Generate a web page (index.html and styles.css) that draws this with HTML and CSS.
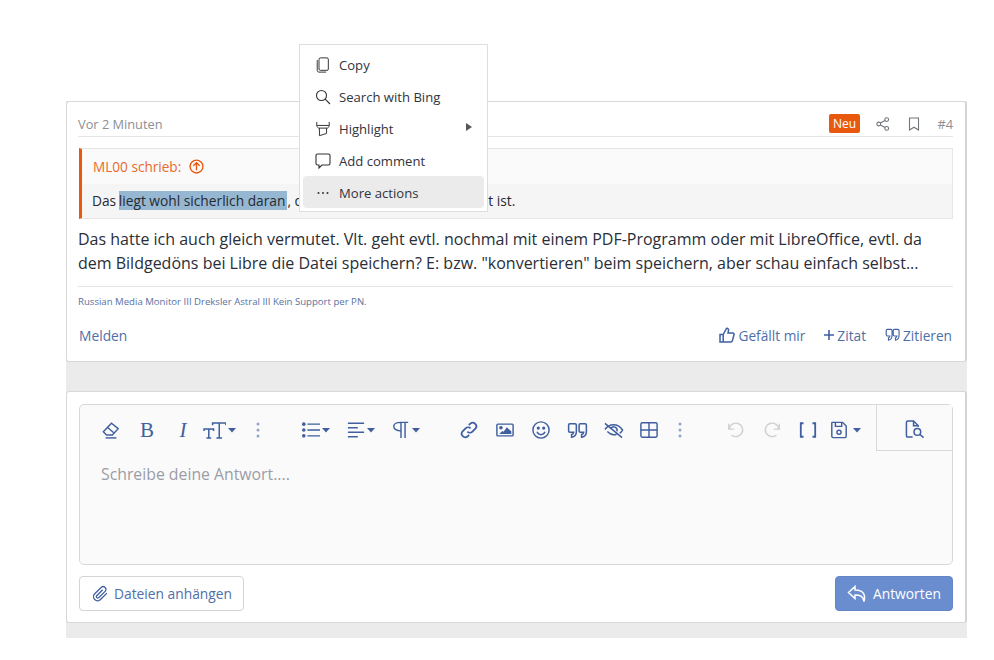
FILE: index.html
```html
<!DOCTYPE html>
<html lang="de">
<head>
<meta charset="utf-8">
<title>Antwort</title>
<link rel="stylesheet" href="styles.css">
</head>
<body>
<svg class="defs" width="0" height="0" aria-hidden="true">
  <symbol id="caret" viewBox="0 0 8 5"><path d="M0 0h8L4 4.600z" fill="currentColor" stroke="none"/></symbol>
  <symbol id="dots" viewBox="0 0 4 16"><g fill="currentColor" stroke="none" opacity=".55"><circle cx="2" cy="2" r="1.500"/><circle cx="2" cy="8" r="1.500"/><circle cx="2" cy="14" r="1.500"/></g></symbol>
</svg>
<main class="page">
  <div class="thread">
    <article class="card post">
      <header class="post-head">
        <span class="muted">Vor 2 Minuten</span>
        <div class="post-tools">
          <span class="badge">Neu</span>
          <svg class="tool-icon" viewBox="0 0 14 14"><circle cx="10.700" cy="2.600" r="1.900"/><circle cx="2.800" cy="7" r="1.900"/><circle cx="10.700" cy="11.400" r="1.900"/><path d="M4.400 6 9 3.500M4.400 8 9 10.500"/></svg>
          <svg class="tool-icon" viewBox="0 0 14 14"><path d="M2.500 1h9v12L7 10.200 2.500 13z"/></svg>
          <span class="muted num">#4</span>
        </div>
      </header>
      <blockquote class="quote">
        <div class="quote-top">
          <span>ML00 schrieb:</span>
          <svg class="up-icon" viewBox="0 0 14 14"><circle cx="7" cy="7" r="6"/><path d="M7 10.500v-7M4 6.300 7 3.400l3 2.900"/></svg>
        </div>
        <div class="quote-text">Das <span class="sel">liegt wohl sicherlich daran</span>, dass die Datei nicht gut gesetzt ist.</div>
      </blockquote>
      <p class="body-text">Das hatte ich auch gleich vermutet. Vlt. geht evtl. nochmal mit einem PDF-Programm oder mit LibreOffice, evtl. da<br>dem Bildgedöns bei Libre die Datei speichern? E: bzw. "konvertieren" beim speichern, aber schau einfach selbst...</p>
      <div class="signature">Russian Media Monitor III Dreksler Astral III Kein Support per PN.</div>
      <footer class="post-actions">
        <a class="link melden">Melden</a>
        <div class="action-group">
          <a class="link action"><svg class="act-icon" viewBox="0 0 16 16"><path d="M1 7.500h3.200V15H1zM4.200 7.500 7.600 1.200c1.500 0 2.200 1 1.900 2.300L9 6h4.800c1 0 1.500.9 1.200 1.800l-1.600 5.800c-.2.800-.8 1.400-1.600 1.400H4.200"/></svg>Gefällt mir</a>
          <a class="link action"><svg class="act-icon plus" viewBox="0 0 10 10"><path d="M5 0v10M0 5h10"/></svg>Zitat</a>
          <a class="link action"><svg class="act-icon quo" viewBox="0 0 16 14"><path d="M2.500 1h3.800c.7 0 1.200.5 1.200 1.200v5c0 2.800-1.500 4.800-3.800 5.300V10c1-.3 1.400-1 1.500-2H2.500c-.7 0-1.200-.5-1.200-1.200V2.200C1.300 1.500 1.800 1 2.500 1zM10 1h3.800c.7 0 1.200.5 1.200 1.200v5c0 2.800-1.500 4.800-3.800 5.300V10c1-.3 1.400-1 1.500-2H10c-.7 0-1.200-.5-1.200-1.200V2.200C8.800 1.500 9.300 1 10 1z"/></svg>Zitieren</a>
        </div>
      </footer>
    </article>

    <section class="card reply">
      <div class="editor">
        <div class="toolbar">
          <div class="tool-row">
            <span class="btn"><svg class="ico" viewBox="0 0 20 20"><path d="M1.500 12 10.500 2.500 18 8.500 11.500 15.500H5z"/><path d="M6 7l7 6"/><path d="M4 18.800h12"/></svg></span>
            <span class="btn glyph">B</span>
            <span class="btn glyph slant">I</span>
            <span class="btn"><svg class="ico tt" viewBox="0 0 24 20"><path d="M1 10.500V8.500h10v2M6 8.500V18M3.500 18h5M10 4.500V2h14v2.500M17 2v16M14 18h6"/></svg><svg class="car"><use href="#caret"/></svg></span>
            <span class="btn gap-a"><svg class="dot3"><use href="#dots"/></svg></span>
          </div>
          <div class="tool-row gap-b">
            <span class="btn wide"><svg class="ico" viewBox="0 0 20 20"><path d="M6 3.500h14M6 10h14M6 16.500h14"/><g fill="currentColor" stroke="none"><circle cx="2" cy="3.500" r="2"/><circle cx="2" cy="10" r="2"/><circle cx="2" cy="16.500" r="2"/></g></svg><svg class="car"><use href="#caret"/></svg></span>
            <span class="btn wide"><svg class="ico" viewBox="0 0 20 20"><path d="M1 2.500h18M1 7.500h11M1 12.500h18M1 17.500h11"/></svg><svg class="car"><use href="#caret"/></svg></span>
            <span class="btn wide"><svg class="ico" viewBox="0 0 20 20"><path d="M9.500 11C5.500 11 2 9 2 6s3.500-4.500 7.500-4.500H18M10 1.500V19M14.500 1.500V19"/></svg><svg class="car"><use href="#caret"/></svg></span>
          </div>
          <div class="tool-row gap-c">
            <span class="btn"><svg class="ico bold" viewBox="0 0 20 20"><path d="M8.200 11.800a4 4 0 0 0 5.600 0l3.500-3.500a4 4 0 0 0-5.600-5.600L9.800 4.600M11.800 8.200a4 4 0 0 0-5.600 0l-3.500 3.500a4 4 0 0 0 5.600 5.600l1.800-1.900"/></svg></span>
            <span class="btn"><svg class="ico" viewBox="0 0 20 20"><rect x="1" y="3.500" width="18" height="13" rx="1"/><circle cx="5.500" cy="7.500" r="1.200" fill="currentColor"/><path d="M3.500 14.500l3.500-3.500 1.500 1 3.500-5 5 4.500v3z" fill="currentColor" stroke="none"/></svg></span>
            <span class="btn"><svg class="ico" viewBox="0 0 20 20"><circle cx="10" cy="10" r="9"/><path d="M5.500 12c1 2.200 2.800 3.200 4.500 3.200s3.500-1 4.500-3.200"/><circle cx="7" cy="7.800" r="1" fill="currentColor"/><circle cx="13" cy="7.800" r="1" fill="currentColor"/></svg></span>
            <span class="btn"><svg class="ico big" viewBox="0 0 22 18"><path d="M3 2h5.500c.8 0 1.300.5 1.300 1.300v7c0 3.300-1.700 5.200-5 5.700v-2.700c1.500-.4 2.100-1.300 2.200-2.500H3c-.8 0-1.300-.5-1.300-1.300V3.300C1.700 2.500 2.200 2 3 2zM14 2h5c.8 0 1.300.5 1.300 1.300v7c0 3.300-1.700 5.200-5 5.700v-2.700c1.500-.4 2.100-1.300 2.200-2.500H14c-.8 0-1.300-.5-1.300-1.300V3.300c0-.8.5-1.300 1.300-1.300z"/></svg></span>
            <span class="btn"><svg class="ico big" viewBox="0 0 22 20"><path d="M2 2.500l18 15M2 9c2-2.800 5-5 9-5 4.500 0 7.500 2.400 9.500 5.500-.8 1.400-1.800 2.500-3 3.400M4.500 11c2 2 4 3.500 6.800 3.500 1 0 2-.2 2.900-.6M7.500 8c1-1.500 4-3 6.500-.5 1 1 1 2.500.5 3.500"/></svg></span>
            <span class="btn"><svg class="ico" viewBox="0 0 20 20"><rect x="1" y="2" width="18" height="16" rx="1.500"/><path d="M1 10h18M10 2v16"/></svg></span>
            <span class="btn narrow"><svg class="dot3"><use href="#dots"/></svg></span>
          </div>
          <div class="tool-row gap-d">
            <span class="btn off"><svg class="ico" viewBox="0 0 20 20"><path d="M2 3v6h6"/><path d="M2.500 9A7.500 7.500 0 1 1 5 15.500"/></svg></span>
            <span class="btn off"><svg class="ico" viewBox="0 0 20 20"><path d="M18 3v6h-6"/><path d="M17.500 9A7.500 7.500 0 1 0 15 15.500"/></svg></span>
            <span class="btn"><svg class="ico bold" viewBox="0 0 20 20"><path d="M5 2.500H2v15h3M15 2.500h3v15h-3"/></svg></span>
            <span class="btn wide save"><svg class="ico" viewBox="0 0 20 20"><path d="M2.500 1.500H14l4 4V17a1.500 1.500 0 0 1-1.500 1.500h-13A1.500 1.500 0 0 1 2 17V2z"/><path d="M6 1.500v4.500h7V1.500"/><circle cx="10" cy="12.500" r="2.300"/></svg><svg class="car"><use href="#caret"/></svg></span>
          </div>
          <div class="preview-tab"><svg class="ico big" viewBox="0 0 22 20"><path d="M9 18H4a1.500 1.500 0 0 1-1.500-1.500v-14A1.500 1.500 0 0 1 4 1h6l5 5v1"/><path d="M10 1v5h5"/><circle cx="14" cy="12.500" r="3.500"/><path d="M16.500 15l4 3.500"/></svg></div>
        </div>
        <div class="placeholder">Schreibe deine Antwort....</div>
      </div>
      <div class="reply-actions">
        <button class="btn-secondary"><svg class="clip" viewBox="0 0 18 18"><path d="M15.800 8.600 9 15.400a4.300 4.300 0 0 1-6.100-6.100l7-7a3 3 0 0 1 4.200 4.200l-7 7a1.500 1.500 0 0 1-2.100-2.100l6.300-6.300"/></svg>Dateien anhängen</button>
        <button class="btn-primary"><svg class="reply-ico" viewBox="0 0 20 18"><path d="M8 1.500 1.500 7.500 8 13.500V10c5 0 8 1 9 6.500 1.500-5.500.5-11.500-9-11.500z"/></svg>Antworten</button>
      </div>
    </section>
  </div>

  <nav class="menu">
    <div class="menu-item"><svg class="m-ico" viewBox="0 0 16 18"><rect x="3.500" y="1" width="10.500" height="14" rx="1.500"/><path d="M1.500 3.500V15c0 1.200.8 2 2 2h8"/></svg>Copy</div>
    <div class="menu-item"><svg class="m-ico" viewBox="0 0 16 16"><circle cx="6.500" cy="6.500" r="5"/><path d="M10.200 10.200 15 15"/></svg>Search with Bing</div>
    <div class="menu-item"><svg class="m-ico" viewBox="0 0 16 18"><path d="M1 1v4c0 1.500 1 2.500 2 3h10c1-.5 2-1.500 2-3V1M1 5h14M4 8v8.500l8-2.500V8"/></svg>Highlight<span class="arrow"></span></div>
    <div class="menu-item"><svg class="m-ico" viewBox="0 0 16 16"><path d="M2.500 1h11A1.500 1.500 0 0 1 15 2.500v8a1.500 1.500 0 0 1-1.500 1.500H7L4 15v-3H2.500A1.500 1.500 0 0 1 1 10.500v-8A1.500 1.500 0 0 1 2.500 1z"/></svg>Add comment</div>
    <div class="menu-item active"><svg class="m-ico" viewBox="0 0 16 16"><g fill="#333" stroke="none"><circle cx="3.500" cy="8" r="1"/><circle cx="8" cy="8" r="1"/><circle cx="12.500" cy="8" r="1"/></g></svg>More actions</div>
  </nav>
</main>
</body>
</html>
```

FILE: styles.css
```css
* { box-sizing: border-box; }
html, body { margin: 0; padding: 0; background: #fff; }
body { font-family: "Open Sans", "Noto Sans", sans-serif; font-size: 14px; color: #2b303b; }
.defs { position: absolute; }
.page { position: relative; width: 994px; height: 660px; overflow: hidden; padding: 101px 0 0 66px; }
.thread { width: 901px; height: 537px; background: #ebebeb; display: flex; flex-direction: column; gap: 29px; }
.card { background: #fff; border: 1px solid #d8d8d8; border-right: 2px solid #d4d4d4; border-radius: 3px; }

.post { height: 261px; padding: 0 12px 0 11px; display: flex; flex-direction: column; }
.post-head { height: 35px; flex: none; border-bottom: 1px solid #e4e4e4; display: flex; justify-content: space-between; align-items: center; padding-top: 9px; }
.muted { color: #8b8f96; font-size: 12.800px; }
.post-tools { display: flex; align-items: center; }
.badge { width: 31px; height: 19px; background: #e9590d; color: #fff; border-radius: 2px; font-size: 12px; line-height: 19px; text-align: center; margin-right: 16px; }
.tool-icon { width: 14px; height: 14px; fill: none; stroke: #71757c; stroke-width: 1.100; margin-right: 17px; }
.tool-icon + .tool-icon { margin-right: 16px; }
.num { width: 16px; text-align: right; }

.quote { margin: 11px 0 0 1px; height: 71px; flex: none; border: 1px solid #e6e6e6; border-left: 3px solid #e9590d; display: flex; flex-direction: column; }
.quote-top { height: 35px; background: #fafafa; color: #e86a2a; font-size: 13.600px; display: flex; align-items: center; padding-left: 11px; }
.up-icon { width: 15px; height: 15px; margin-left: 8px; fill: none; stroke: #e9590d; stroke-width: 1.300; }
.quote-text { flex: 1; background: #f5f5f5; font-size: 13.750px; line-height: 18px; padding: 8px 0 0 10px; white-space: nowrap; color: #262a33; }
.sel { background: #96b7d1; margin-left: -1px; padding-right: 2px; }

.body-text { margin: 8px 0 0; font-size: 16px; line-height: 24px; white-space: nowrap; color: #2a2e38; }
.signature { margin-top: 11px; border-top: 1px solid #e4e4e4; padding-top: 8px; font-size: 9.600px; line-height: 13px; color: #59719f; }
.post-actions { flex: 1; display: flex; justify-content: space-between; align-items: center; padding: 1px 1px 0 1px; }
.link { color: #4f6fa8; font-size: 13.700px; }
.melden { font-size: 13.800px; }
.action-group { display: flex; align-items: center; gap: 19px; }
.action { display: flex; align-items: center; gap: 3px; }
.act-icon { width: 16px; height: 16px; fill: none; stroke: #3f60a5; stroke-width: 1.500; }
.plus { width: 10px; height: 10px; stroke-width: 1.600; }
.quo { width: 15px; height: 14px; stroke-width: 1.200; }

.reply { height: 232px; padding: 12px 12px 0 12px; }
.editor { height: 161px; border: 1px solid #d8d8d8; border-radius: 5px; background: #fafafa; }
.toolbar { height: 46px; display: flex; padding-left: 13px; position: relative; color: #3f5f9f; }
.tool-row { display: flex; height: 46px; padding-top: 4px; }
.gap-a { margin-left: 3px; }
.gap-b { margin-left: 17px; }
.gap-c { margin-left: 23px; }
.gap-d { margin-left: 25px; }
.btn { width: 36px; height: 42px; display: flex; align-items: center; justify-content: center; gap: 2px; }
.btn.wide { width: 45px; }
.btn.narrow { width: 26px; }
.btn.off { color: #d0d0d0; }
.btn.save { margin-left: -3px; gap: 5px; }
.glyph { font-family: "Liberation Serif", serif; font-size: 21px; }
.slant { font-style: italic; }
.ico { width: 18px; height: 18px; fill: none; stroke: currentColor; stroke-width: 1.600; flex: none; }
.ico.bold { stroke-width: 2; }
.ico.tt { width: 23px; height: 19px; }
.ico.big { width: 21px; height: 19px; }
.car { width: 8px; height: 5px; color: #3f5f9f; flex: none; }
.dot3 { width: 4px; height: 16px; color: #3f5f9f; }
.preview-tab { position: absolute; right: 0; top: 0; width: 76px; height: 46px; padding-top: 4px; background: #fafafa; border-left: 1px solid #d8d8d8; border-bottom: 1px solid #d8d8d8; display: flex; align-items: center; justify-content: center; }
.placeholder { padding: 12px 0 0 21px; font-size: 15.800px; line-height: 22px; color: #9a9da6; }

.reply-actions { display: flex; justify-content: space-between; margin-top: 11px; }
.btn-secondary, .btn-primary { height: 35px; border-radius: 4px; font: inherit; font-size: 13.800px; display: flex; align-items: center; padding: 0; }
.btn-secondary { width: 165px; background: #fff; border: 1px solid #d4d4d4; color: #4f6fa8; padding-left: 12px; gap: 5px; }
.btn-primary { width: 118px; background: #6a8dd0; border: 1px solid #6486c8; color: #fff; padding-left: 11px; gap: 6px; font-weight: 500; }
.clip { width: 17px; height: 17px; fill: none; stroke: #3f5f9f; stroke-width: 1.400; }
.reply-ico { width: 20px; height: 18px; fill: none; stroke: #fff; stroke-width: 1.500; }

.menu { position: absolute; left: 299px; top: 44px; width: 189px; height: 168px; background: #fff; border: 1px solid #dedede; padding: 3px; display: flex; flex-direction: column; }
.menu-item { height: 32px; display: flex; align-items: center; padding: 2px 0 0 12px; font-size: 13.100px; color: #30343c; position: relative; border-radius: 4px; }
.menu-item.active { background: #ebebeb; }
.m-ico { width: 16px; height: 16px; fill: none; stroke: #333; stroke-width: 1.100; margin-right: 8px; flex: none; }
.arrow { position: absolute; right: 12px; top: 11px; border-left: 6px solid #555; border-top: 4px solid transparent; border-bottom: 4px solid transparent; }
```
